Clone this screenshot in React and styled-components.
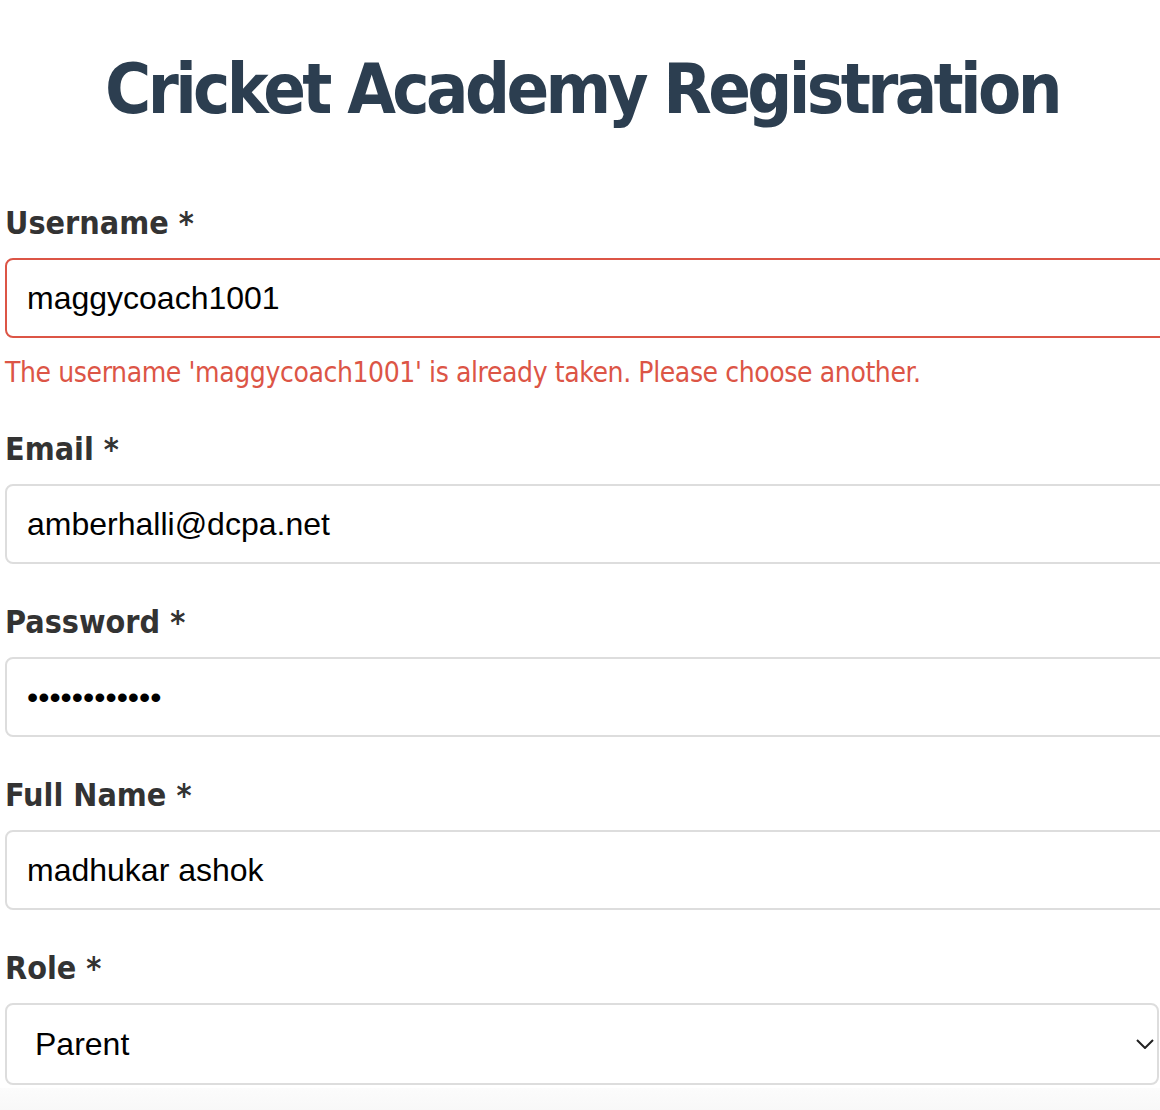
import React from "react";
import styled, { createGlobalStyle } from "styled-components";

const GlobalStyle = createGlobalStyle`
  html, body {
    margin: 0;
    padding: 0;
    background: #ffffff;
    overflow: hidden;
  }
`;

const Page = styled.div`
  width: 1160px;
  height: 1110px;
  overflow: hidden;
  display: flex;
  flex-direction: column;
`;

const Form = styled.form`
  width: 1154px;
  margin-left: 5px;
  padding-top: 47px;
`;

const Title = styled.h1`
  margin: 0 0 72px;
  text-align: center;
  font-family: "DejaVu Sans Condensed", "DejaVu Sans", sans-serif;
  font-weight: bold;
  font-size: 70px;
  line-height: 84px;
  letter-spacing: -3.6px;
  color: #2c3e50;
  white-space: nowrap;
`;

const Field = styled.div`
  margin-bottom: ${(p) => (p.$last ? "0" : "38px")};
`;

const Label = styled.label`
  display: block;
  margin-bottom: 15px;
  font-family: "DejaVu Sans Condensed", "DejaVu Sans", sans-serif;
  font-weight: bold;
  font-size: 32px;
  line-height: 40px;
  color: #333333;
`;

const Input = styled.input`
  display: block;
  width: 100%;
  height: 40px;
  padding: 18px 20px;
  margin: 0;
  border: 2px solid ${(p) => (p.$error ? "#dc5546" : "#dddddd")};
  border-radius: 8px;
  font-family: "Liberation Sans", Arial, sans-serif;
  font-size: 32px;
  line-height: 40px;
  color: #000000;
  background: #ffffff;
  outline: none;
`;

const ErrorText = styled.div`
  margin-top: 17px;
  font-family: "DejaVu Sans Condensed", "DejaVu Sans", sans-serif;
  font-size: 28px;
  line-height: 36px;
  letter-spacing: -0.4px;
  color: #dc5546;
  white-space: nowrap;
`;

const SelectWrap = styled.div`
  position: relative;
`;

const Select = styled.select`
  display: block;
  width: 100%;
  height: 82px;
  box-sizing: border-box;
  padding: 0 60px 0 28px;
  margin: 0;
  border: 2px solid #dddddd;
  border-radius: 8px;
  appearance: none;
  -webkit-appearance: none;
  font-family: "Liberation Sans", Arial, sans-serif;
  font-size: 32px;
  color: #000000;
  background: #ffffff;
  outline: none;
`;

const Chevron = styled.svg`
  position: absolute;
  right: 5px;
  top: 36px;
  width: 18px;
  height: 10px;
  pointer-events: none;
`;

const BottomStrip = styled.div`
  flex: 1;
  margin-top: 3px;
  background: linear-gradient(#fcfcfc, #f8f8f8);
`;

const fields = [
  { id: "email", label: "Email *", type: "email", value: "amberhalli@dcpa.net" },
  { id: "password", label: "Password *", type: "password", value: "maggy1001abc" },
  { id: "fullName", label: "Full Name *", type: "text", value: "madhukar ashok" },
];

const App = () => {
  return (
    <Page>
      <GlobalStyle />
      <Form onSubmit={(e) => e.preventDefault()}>
        <Title>Cricket Academy Registration</Title>
        <Field>
          <Label htmlFor="username">Username *</Label>
          <Input id="username" type="text" defaultValue="maggycoach1001" $error />
          <ErrorText>
            The username 'maggycoach1001' is already taken. Please choose another.
          </ErrorText>
        </Field>
        {fields.map((f) => (
          <Field key={f.id}>
            <Label htmlFor={f.id}>{f.label}</Label>
            <Input id={f.id} type={f.type} defaultValue={f.value} />
          </Field>
        ))}
        <Field $last>
          <Label htmlFor="role">Role *</Label>
          <SelectWrap>
            <Select id="role" defaultValue="parent">
              <option value="player">Player</option>
              <option value="parent">Parent</option>
              <option value="coach">Coach</option>
            </Select>
            <Chevron viewBox="0 0 18 10" fill="none">
              <path d="M1 1 L9 9 L17 1" stroke="#222" strokeWidth="2" />
            </Chevron>
          </SelectWrap>
        </Field>
      </Form>
      <BottomStrip />
    </Page>
  );
};

export default App;
